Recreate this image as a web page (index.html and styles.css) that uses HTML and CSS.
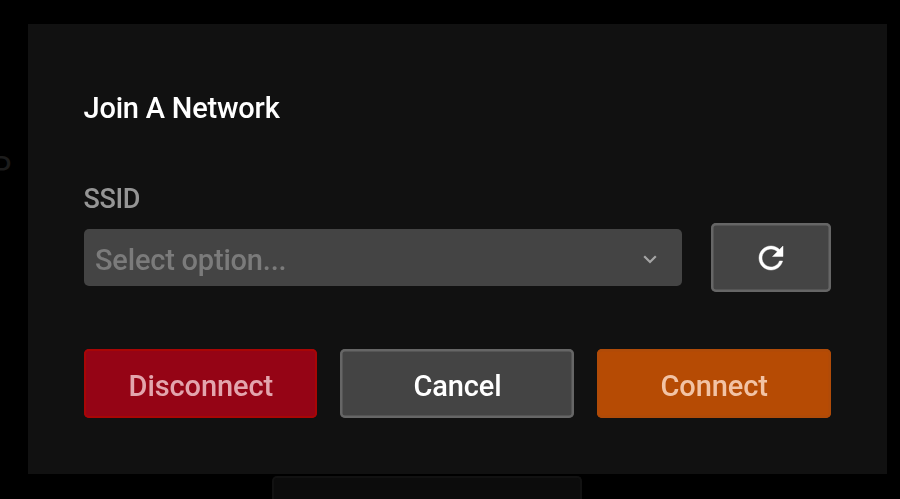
FILE: index.html
```html
<!DOCTYPE html>
<html lang="en">
<head>
<meta charset="utf-8">
<title>Join A Network</title>
<link rel="stylesheet" href="styles.css">
</head>
<body>
<div class="backdrop-label">P</div>
<main class="dialog">
  <h1 class="title">Join A Network</h1>
  <div class="label">SSID</div>
  <div class="field">
    <div class="select">
      <span>Select option...</span>
      <svg class="chevron" viewBox="0 0 14 9"><path d="M1.200 1.200 7 7l5.800-5.800"/></svg>
    </div>
    <button class="btn refresh" aria-label="Refresh">
      <svg class="refresh-icon" viewBox="4 4 16 16"><path d="M17.650 6.350C16.200 4.900 14.210 4 12 4c-4.420 0-7.990 3.580-7.990 8s3.570 8 7.990 8c3.730 0 6.840-2.550 7.730-6h-2.080c-.82 2.330-3.040 4-5.650 4-3.310 0-6-2.690-6-6s2.690-6 6-6c1.660 0 3.140.69 4.220 1.780L13 11h7V4l-2.350 2.350z"/></svg>
    </button>
  </div>
  <div class="actions">
    <button class="btn danger">Disconnect</button>
    <button class="btn">Cancel</button>
    <button class="btn primary">Connect</button>
  </div>
</main>
<div class="backdrop-button"></div>
</body>
</html>
```
FILE: styles.css
```css
* {
  box-sizing: border-box;
}

body {
  margin: 0;
  height: 499px;
  overflow: hidden;
  position: relative;
  background: #000;
  color: #fff;
  font-family: Roboto, sans-serif;
  font-weight: 500;
  font-size: 29px;
  letter-spacing: -0.200px;
}

.backdrop-label {
  position: absolute;
  left: -10px;
  top: 148px;
  font-size: 34px;
  font-weight: 400;
  line-height: 40px;
  color: #1c1c1c;
}

.dialog {
  width: 858.500px;
  height: 449.500px;
  margin: 24px 0 0 28px;
  padding: 66px 56px 0 55.500px;
  background: #111;
  will-change: transform;
}

.title {
  margin: 0;
  font-size: 29px;
  line-height: 36px;
  font-weight: 500;
}

.label {
  margin-top: 57px;
  font-size: 27px;
  line-height: 32px;
  letter-spacing: -0.400px;
  color: #959595;
}

.field {
  display: flex;
  align-items: center;
  gap: 28.500px;
  margin-top: 8px;
}

.select {
  flex: 1;
  display: flex;
  align-items: center;
  justify-content: space-between;
  height: 57px;
  padding: 4px 25px 0 11.500px;
  border-radius: 5px;
  background: #444;
  color: #7b7b7b;
}

.chevron {
  width: 14px;
  height: 9px;
  fill: none;
  stroke: #a5a5a5;
  stroke-width: 2.200;
}

.btn {
  height: 69px;
  padding: 4px 0 0 1px;
  border: 0;
  border-radius: 5px;
  background: #444;
  box-shadow: inset 0 0 0 2.500px #666;
  color: #fff;
  font: inherit;
  letter-spacing: -0.100px;
}

.refresh {
  display: flex;
  align-items: center;
  justify-content: center;
  width: 120px;
  padding: 0 0 0 1px;
}

.refresh-icon {
  width: 24px;
  height: 24px;
  fill: #fff;
  stroke: #fff;
  stroke-width: .3;
  overflow: visible;
}

.actions {
  display: grid;
  grid-template-columns: repeat(3, 1fr);
  gap: 23px;
  margin-top: 57px;
}

.danger {
  background: #950415;
  box-shadow: inset 0 0 0 2px #a80606;
  color: #e3a5ad;
}

.primary {
  background: #b64b04;
  box-shadow: inset 0 0 0 2.500px #b04b08;
  color: #f2c3a5;
}

.backdrop-button {
  width: 310px;
  height: 23px;
  margin: 2.500px 0 0 272px;
  border: 2px solid #121212;
  border-bottom: 0;
  border-radius: 5px 5px 0 0;
  background: #0c0c0c;
}
```
